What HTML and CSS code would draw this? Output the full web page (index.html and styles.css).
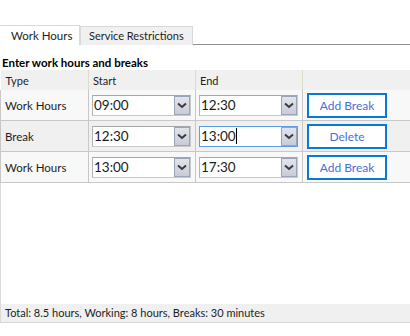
FILE: index.html
```html
<!DOCTYPE html>
<html>
<head>
<meta charset="utf-8">
<link rel="stylesheet" href="styles.css">
</head>
<body>
<div class="page">
  <div class="tabs">
    <div class="tab active">Work Hours</div>
    <div class="tab">Service Restrictions</div>
    <div class="tab-fill"></div>
  </div>
  <div class="content">
    <div class="heading">Enter work hours and breaks</div>
    <table class="grid">
      <colgroup>
        <col class="c1"><col class="c2"><col class="c3"><col class="c4">
      </colgroup>
      <thead>
        <tr><th>Type</th><th>Start</th><th>End</th><th></th></tr>
      </thead>
      <tbody>
        <tr class="odd">
          <td class="type">Work Hours</td>
          <td><div class="combo"><span class="val">09:00</span><span class="drop"><svg width="10" height="7" viewBox="0 0 10 7"><path d="M1 1.5 L5 5 L9 1.5" fill="none" stroke="#3a3a3a" stroke-width="2"/></svg></span></div></td>
          <td><div class="combo"><span class="val">12:30</span><span class="drop"><svg width="10" height="7" viewBox="0 0 10 7"><path d="M1 1.5 L5 5 L9 1.5" fill="none" stroke="#3a3a3a" stroke-width="2"/></svg></span></div></td>
          <td><button class="btn">Add Break</button></td>
        </tr>
        <tr class="even">
          <td class="type">Break</td>
          <td><div class="combo"><span class="val">12:30</span><span class="drop"><svg width="10" height="7" viewBox="0 0 10 7"><path d="M1 1.5 L5 5 L9 1.5" fill="none" stroke="#3a3a3a" stroke-width="2"/></svg></span></div></td>
          <td><div class="combo focus"><span class="val">13:00<span class="caret"></span></span><span class="drop"><svg width="10" height="7" viewBox="0 0 10 7"><path d="M1 1.5 L5 5 L9 1.5" fill="none" stroke="#3a3a3a" stroke-width="2"/></svg></span></div></td>
          <td><button class="btn">Delete</button></td>
        </tr>
        <tr class="odd">
          <td class="type">Work Hours</td>
          <td><div class="combo"><span class="val">13:00</span><span class="drop"><svg width="10" height="7" viewBox="0 0 10 7"><path d="M1 1.5 L5 5 L9 1.5" fill="none" stroke="#3a3a3a" stroke-width="2"/></svg></span></div></td>
          <td><div class="combo"><span class="val">17:30</span><span class="drop"><svg width="10" height="7" viewBox="0 0 10 7"><path d="M1 1.5 L5 5 L9 1.5" fill="none" stroke="#3a3a3a" stroke-width="2"/></svg></span></div></td>
          <td><button class="btn">Add Break</button></td>
        </tr>
      </tbody>
    </table>
    <div class="spacer"></div>
    <div class="status">Total: 8.5 hours, Working: 8 hours, Breaks: 30 minutes</div>
  </div>
</div>
</body>
</html>
```
FILE: styles.css
```css
html, body {
  margin: 0;
  padding: 0;
  background: #ffffff;
}
body {
  font-family: Lato, "Noto Sans", sans-serif;
  font-size: 11px;
  color: #1e1e1e;
}
.page {
  width: 410px;
  height: 336px;
  padding-top: 25px;
  box-sizing: border-box;
  display: flex;
  flex-direction: column;
}
.tabs {
  display: flex;
  height: 20px;
  align-items: flex-end;
  white-space: nowrap;
}
.tab {
  height: 18px;
  line-height: 18px;
  padding: 0 8px;
  background: #f0f0f0;
  border: 1px solid #d9d9d9;
  border-bottom: none;
  color: #1e1e1e;
  font-size: 11px;
}
.tab.active {
  height: 20px;
  line-height: 20px;
  background: #ffffff;
  border-left: none;
  width: 80px;
  box-sizing: border-box;
  padding: 0 0 0 11px;
  font-size: 11.5px;
}
.tab-fill {
  flex: 1;
  border-bottom: 1px solid #8e8f94;
}
.content {
  flex: 1;
  display: flex;
  flex-direction: column;
}
.heading {
  font-weight: bold;
  font-size: 11.5px;
  padding: 11px 0 0 2px;
  height: 14px;
  line-height: 14px;
  color: #000;
}
.grid {
  border-collapse: collapse;
  width: 410px;
  table-layout: fixed;
  margin-top: 0;
}
.c1 { width: 88px; }
.c2 { width: 107px; }
.c3 { width: 107px; }
.c4 { width: 108px; }
.grid th {
  background: #f0f0f0;
  font-weight: normal;
  text-align: left;
  height: 20px;
  padding: 0 0 0 4px;
  border-left: 1px solid #dcdcc8;
}
.grid th:first-child { border-left: none; padding-left: 5px; }
.grid td {
  height: 30px;
  padding: 0 0 0 3px;
  border: 1px solid #c8c8c8;
  border-top: none;
  vertical-align: middle;
}
.grid td:first-child { border-left: 1px solid #c8c8c8; }
.grid td.type { padding-left: 4px; font-size: 11.5px; }
.odd td { background: #f8f8f8; }
.even td { background: #f0f0f0; }
.combo {
  width: 99px;
  height: 21px;
  box-sizing: border-box;
  border: 1px solid #c9c9c9;
  border-top-color: #a6a6a6;
  border-left-color: #b4b4b4;
  background: #fff;
  display: flex;
  align-items: center;
}
.combo.focus {
  border-color: #5d9de8;
}
.val {
  flex: 1;
  font-size: 13.5px;
  padding-left: 1px;
  color: #1a1a1a;
  display: flex;
  align-items: center;
}
.caret {
  width: 1px;
  height: 16px;
  background: #000;
}
.drop {
  width: 16px;
  height: 19px;
  box-sizing: border-box;
  border: 1px solid #9aa6b8;
  background: linear-gradient(#e2e4ec, #c9ccd8);
  display: flex;
  align-items: center;
  justify-content: center;
}
.btn {
  width: 80px;
  height: 25px;
  margin-left: 1px;
  box-sizing: border-box;
  border: 1px solid #0a78d4;
  box-shadow: inset 0 0 0 1px #0a78d4;
  background: #ffffff;
  color: #4a6fd8;
  font-family: inherit;
  font-size: 12px;
  padding: 0;
}
.spacer {
  flex: 1;
  border-left: 1px solid #dadada;
}
.status {
  height: 18px;
  line-height: 18px;
  background: #f0f0f0;
  border-bottom: 1px solid #d6d6d6;
  border-left: 1px solid #dadada;
  padding-left: 4px;
  margin-bottom: 13px;
}
```
